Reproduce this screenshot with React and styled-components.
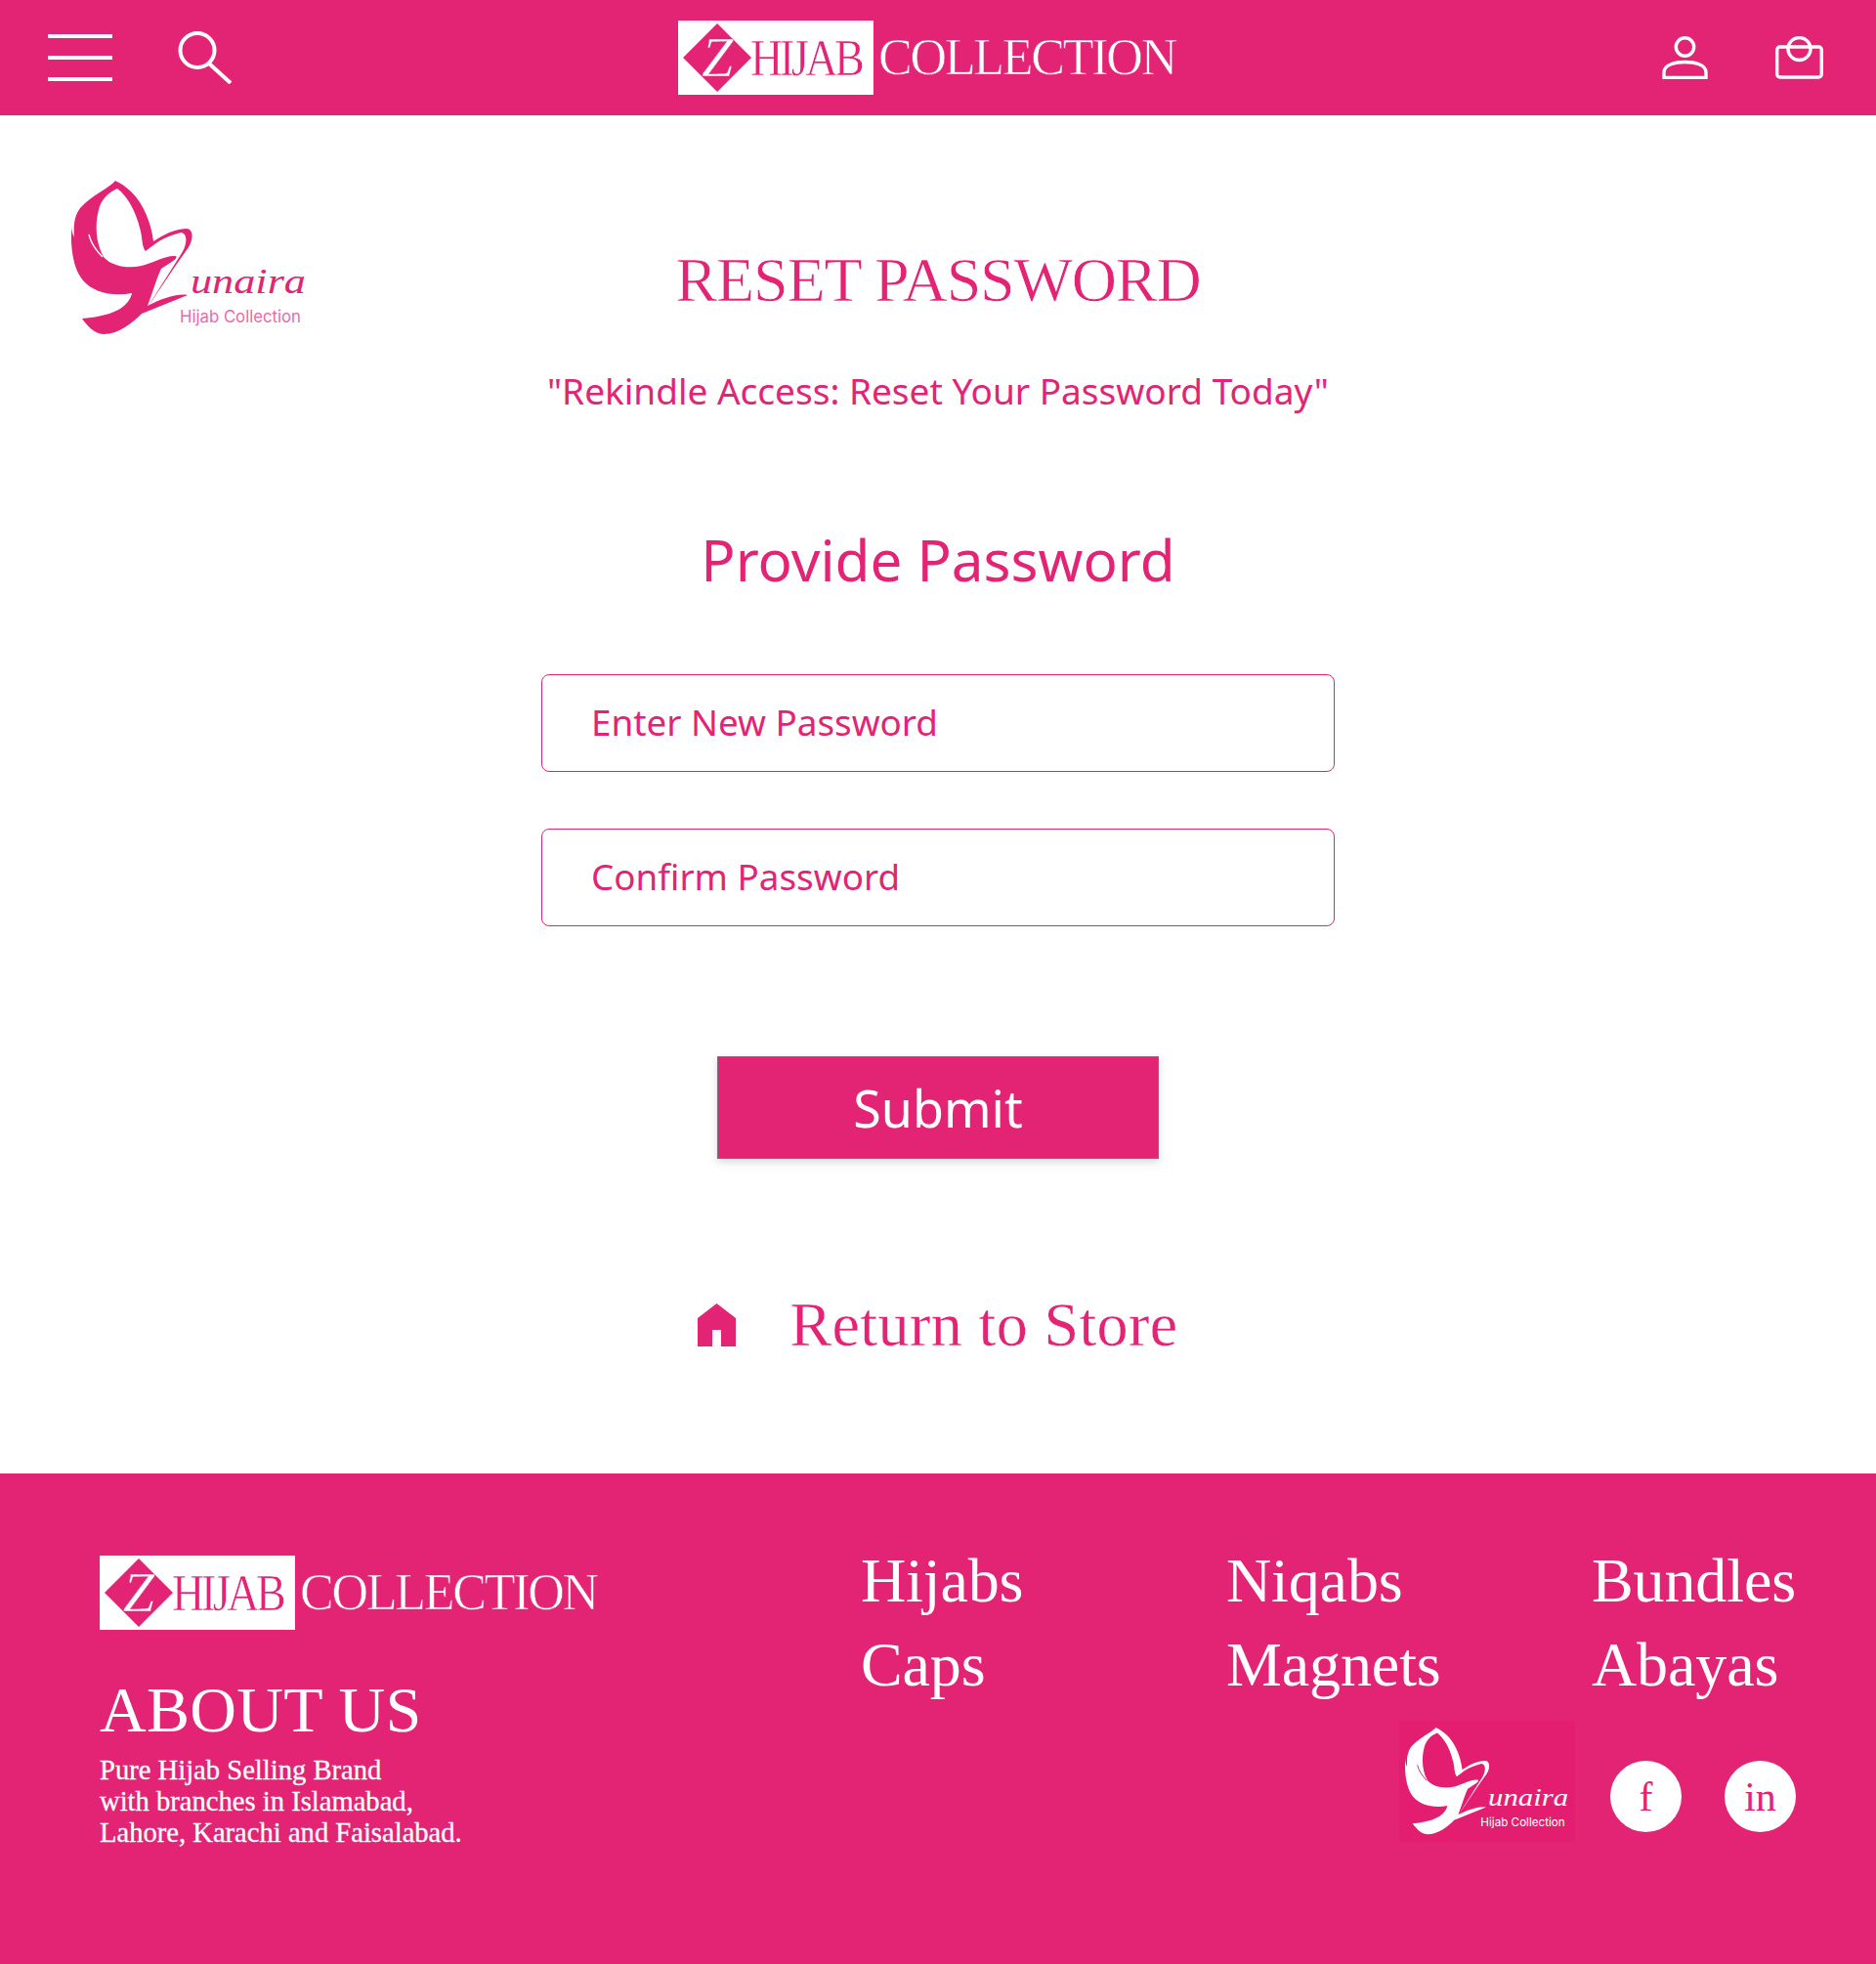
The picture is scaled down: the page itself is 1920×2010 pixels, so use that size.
import React from "react";
import styled, { createGlobalStyle } from "styled-components";

const PINK = "#e32474";
const SERIF = `"Liberation Serif", serif`;
const SANS = `"Noto Sans", "Open Sans", sans-serif`;

const Global = createGlobalStyle`
  html, body { margin: 0; padding: 0; background: #fff; }
  * { box-sizing: border-box; }
`;

const Page = styled.div`
  width: 1920px;
  height: 2010px;
  display: flex;
  flex-direction: column;
  overflow: hidden;
`;

const Header = styled.header`
  height: 118px;
  background: ${PINK};
  display: grid;
  grid-template-columns: 1fr auto 1fr;
  align-items: center;
  padding: 0 54px 0 49px;
`;
const HeaderLeft = styled.div`
  display: flex;
  align-items: center;
  gap: 67px;
`;
const HeaderRight = styled.div`
  display: flex;
  justify-content: flex-end;
  align-items: center;
  gap: 69px;
`;
const Burger = styled.button`
  width: 66px;
  height: 48px;
  padding: 0;
  border: 0;
  background: transparent;
  display: flex;
  flex-direction: column;
  justify-content: space-between;
  span { display: block; height: 4px; background: #fff; }
`;
const IconSvg = styled.svg`
  display: block;
  fill: none;
  stroke: #fff;
`;

const Brand = styled.div`
  display: flex;
  align-items: center;
  gap: 5px;
  font-family: ${SERIF};
  margin-right: ${(p) => p.$shift || 0}px;
`;
const BrandBox = styled.div`
  width: 200px;
  height: 76px;
  background: #fff;
  box-shadow: inset 0 2px 3px rgba(0, 0, 0, 0.08);
  display: flex;
  align-items: center;
  padding-left: 5px;
`;
const Diamond = styled.div`
  width: 70px;
  height: 70px;
  flex: none;
  background: ${PINK};
  clip-path: polygon(50% 0, 100% 50%, 50% 100%, 0 50%);
  color: #fff;
  display: flex;
  align-items: center;
  justify-content: center;
  font-size: 58px;
  line-height: 1;
  font-style: italic;
  -webkit-text-stroke: 0.4px ${PINK};
`;
const Hijab = styled.span`
  color: ${PINK};
  font-size: 53px;
  line-height: 1;
  letter-spacing: -4px;
  white-space: nowrap;
  margin-left: -1px;
  transform: scaleX(0.87);
  transform-origin: left center;
  -webkit-text-stroke: 0.5px #fff;
`;
const Collection = styled.span`
  color: #fff;
  font-size: 52px;
  line-height: 1;
  letter-spacing: -2.25px;
  white-space: nowrap;
  -webkit-text-stroke: 0.6px ${PINK};
`;

const Main = styled.main`
  display: grid;
  grid-template-columns: 554px 812px 554px;
  height: 1390px;
`;
const LogoCell = styled.div`
  padding: 67px 0 0 73px;
`;
const Center = styled.div`
  display: flex;
  flex-direction: column;
  align-items: center;
  padding-top: 129px;
  color: ${PINK};
`;
const Title = styled.h1`
  margin: 0;
  font: 400 64px/80px ${SERIF};
  letter-spacing: -1.15px;
  white-space: nowrap;
  -webkit-text-stroke: 0.6px #fff;
`;
const Tagline = styled.p`
  margin: 48px 0 0;
  font: 400 37px/50px ${SANS};
  white-space: nowrap;
`;
const SubTitle = styled.h2`
  margin: 113px 0 0;
  font: 400 58.4px/70px ${SANS};
  white-space: nowrap;
`;
const Field = styled.input`
  display: block;
  width: 812px;
  height: 100px;
  margin-top: ${(p) => p.$top}px;
  padding: 0 50px 2px;
  border: 1px solid ${PINK};
  border-radius: 8px;
  background: #fff;
  color: ${PINK};
  font: 400 36.8px ${SANS};
  outline: none;
  &::placeholder { color: ${PINK}; opacity: 1; }
`;
const Submit = styled.button`
  width: 452px;
  height: 105px;
  margin-top: 133px;
  border: 1px solid #6f7478;
  background: ${PINK};
  box-shadow: 0 3px 8px rgba(0, 0, 0, 0.16);
  color: #fff;
  font: 400 52px ${SANS};
  padding: 0;
`;
const ReturnLink = styled.a`
  margin-top: 135px;
  display: flex;
  align-items: center;
  gap: 55px;
  color: ${PINK};
  font: 400 64px/70px ${SERIF};
  letter-spacing: 0.4px;
  white-space: nowrap;
  text-decoration: none;
  -webkit-text-stroke: 0.3px #fff;
`;
const HomeSvg = styled.svg`
  display: block;
  fill: ${PINK};
`;

const Footer = styled.footer`
  flex: 1;
  background: ${PINK};
  color: #fff;
  display: flex;
  padding: 84px 82px 0 102px;
  font-family: ${SERIF};
`;
const FooterLeft = styled.div`
  width: 780px;
`;
const AboutTitle = styled.h3`
  margin: 45px 0 0;
  font: 400 66px/74px ${SERIF};
  letter-spacing: 0.3px;
  white-space: nowrap;
`;
const AboutText = styled.p`
  margin: 9px 0 0;
  font: 400 28.6px/32px ${SERIF};
  -webkit-text-stroke: 0.3px #fff;
  white-space: nowrap;
`;
const FooterRight = styled.div`
  flex: 1;
  margin-top: -17px;
`;
const NavGrid = styled.nav`
  display: grid;
  grid-template-columns: 374px 374px auto;
  grid-auto-rows: 86px;
  align-items: center;
`;
const NavLink = styled.a`
  color: #fff;
  font: 400 64px/86px ${SERIF};
  letter-spacing: -0.1px;
  text-decoration: none;
  white-space: nowrap;
`;
const SocialRow = styled.div`
  display: flex;
  justify-content: flex-end;
  align-items: flex-start;
  margin-top: 14px;
  gap: 44px;
`;
const LogoTile = styled.div`
  width: 180px;
  height: 124px;
  background: #e31e71;
  display: flex;
  align-items: center;
  justify-content: center;
  margin-right: -8px;
`;
const Circle = styled.a`
  width: 73px;
  height: 73px;
  margin-top: 41px;
  border-radius: 50%;
  background: #fff;
  color: ${PINK};
  display: flex;
  align-items: center;
  justify-content: center;
  font: 400 42px/1 ${SERIF};
  text-decoration: none;
`;

const BrandLogo = ({ shift }) => (
  <Brand $shift={shift}>
    <BrandBox>
      <Diamond>Z</Diamond>
      <Hijab>HIJAB</Hijab>
    </BrandBox>
    <Collection>COLLECTION</Collection>
  </Brand>
);

const ZunairaLogo = ({ width, height, color, accent, slit }) => (
  <svg width={width} height={height} viewBox="0 0 241 158" style={{ display: "block" }}>
    <path
      fill={color}
      d="M45 0C38 8 22 14 9 28C3 36 2 46 3 58C1 54 0 50 0 46C-1 70 2 90 12 102C22 114 42 119 62 115C60 125 50 138 11 141C16 148 24 157 33 157C48 157 62 146 72 136L119 117C108 115 92 121 78 128C84 112 88 98 92 90C100 84 110 80 107 77C96 76 84 84 72 87C58 90 42 88 33 78C24 62 24 42 29 26C33 16 40 11 47 8C58 16 66 32 70 48C73 58 72 68 76 72C84 66 92 58 112 53C120 54 118 66 113 74L75 134C86 118 100 96 120 68C126 58 124 48 117 49C100 50 88 60 84 62C82 44 74 24 62 12C56 6 50 2 45 0Z"
    />
    <path d="M18 55C20 64 26 72 32 78" fill="none" stroke={slit} strokeWidth="1.4" />
    <text
      x="122"
      y="115"
      fill={color}
      fontFamily='"Liberation Serif", serif'
      fontStyle="italic"
      fontSize="36"
      textLength="118"
      lengthAdjust="spacingAndGlyphs"
    >
      unaira
    </text>
    <text
      x="111"
      y="145"
      fill={accent}
      fontFamily="Inter, sans-serif"
      fontSize="17"
      textLength="124"
      lengthAdjust="spacingAndGlyphs"
    >
      Hijab Collection
    </text>
  </svg>
);

export default function App() {
  return (
    <Page>
      <Global />
      <Header>
        <HeaderLeft>
          <Burger aria-label="menu">
            <span />
            <span />
            <span />
          </Burger>
          <IconSvg width="56" height="54" viewBox="0 0 56 54" strokeWidth="4">
            <circle cx="20" cy="19.5" r="17.5" />
            <path d="M32 33L54 53" />
          </IconSvg>
        </HeaderLeft>
        <BrandLogo shift={18} />
        <HeaderRight>
          <IconSvg width="47" height="44" viewBox="0 0 47 44" strokeWidth="3.4">
            <circle cx="23.5" cy="11" r="9.2" />
            <path d="M2 42.5V37C2 29 14 26.5 23.5 26.5C33 26.5 45 29 45 37V42.5Z" />
          </IconSvg>
          <IconSvg width="49" height="44" viewBox="0 0 49 44" strokeWidth="3.4">
            <rect x="1.7" y="11" width="45.6" height="31" rx="3" />
            <circle cx="24.5" cy="13" r="11.5" />
          </IconSvg>
        </HeaderRight>
      </Header>
      <Main>
        <LogoCell>
          <ZunairaLogo width={241} height={158} color={PINK} accent="#ea6ba3" slit="#fff" />
        </LogoCell>
        <Center>
          <Title>RESET PASSWORD</Title>
          <Tagline>"Rekindle Access: Reset Your Password Today"</Tagline>
          <SubTitle>Provide Password</SubTitle>
          <Field $top={82} type="password" placeholder="Enter New Password" />
          <Field $top={58} type="password" placeholder="Confirm Password" />
          <Submit>Submit</Submit>
          <ReturnLink href="#">
            <HomeSvg width="39" height="44" viewBox="0 0 39 44">
              <path d="M19.5 0L39 15V44H24V27H15V44H0V15Z" />
            </HomeSvg>
            Return to Store
          </ReturnLink>
        </Center>
        <div />
      </Main>
      <Footer>
        <FooterLeft>
          <BrandLogo />
          <AboutTitle>ABOUT US</AboutTitle>
          <AboutText>
            Pure Hijab Selling Brand
            <br />
            with branches in Islamabad,
            <br />
            Lahore, Karachi and Faisalabad.
          </AboutText>
        </FooterLeft>
        <FooterRight>
          <NavGrid>
            <NavLink href="#">Hijabs</NavLink>
            <NavLink href="#">Niqabs</NavLink>
            <NavLink href="#">Bundles</NavLink>
            <NavLink href="#">Caps</NavLink>
            <NavLink href="#">Magnets</NavLink>
            <NavLink href="#">Abayas</NavLink>
          </NavGrid>
          <SocialRow>
            <LogoTile>
              <ZunairaLogo width={168} height={110} color="#fff" accent="#fff" slit={PINK} />
            </LogoTile>
            <Circle href="#">f</Circle>
            <Circle href="#">in</Circle>
          </SocialRow>
        </FooterRight>
      </Footer>
    </Page>
  );
}
